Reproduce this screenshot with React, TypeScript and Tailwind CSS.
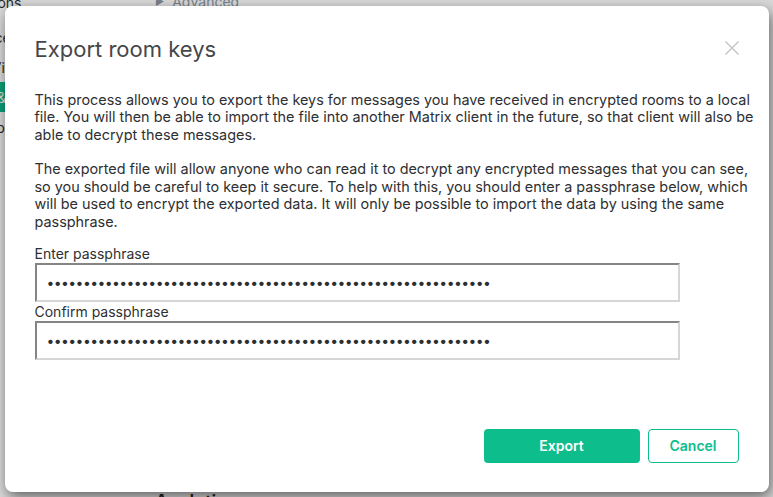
const INTRO =
  'This process allows you to export the keys for messages you have received in encrypted rooms to a local file. You will then be able to import the file into another Matrix client in the future, so that client will also be able to decrypt these messages.';
const WARNING =
  'The exported file will allow anyone who can read it to decrypt any encrypted messages that you can see, so you should be careful to keep it secure. To help with this, you should enter a passphrase below, which will be used to encrypt the exported data. It will only be possible to import the data by using the same passphrase.';

const SECRET = 'x'.repeat(61);

const tabs = ['Notifications', 'Preferences', 'Voice & Video', 'Security & Privacy', 'Labs & About'];

function CloseIcon() {
  return (
    <svg width="14" height="14" viewBox="0 0 14 14" fill="none">
      <path d="M0.5 0.5L13.5 13.5M13.5 0.5L0.5 13.5" stroke="#c1c1c1" strokeWidth="1.2" />
    </svg>
  );
}

function PassField({ label }: { label: string }) {
  return (
    <label className="flex flex-col">
      <span className="text-[14px] leading-[19px] text-[#2e2f32]">{label}</span>
      <input
        type="password"
        readOnly
        value={SECRET}
        className="h-[39px] w-[645px] border-2 border-t-[#858585] border-l-[#858585] border-b-[#d6d6d6] border-r-[#d6d6d6] bg-white pl-[10px] text-[14px] tracking-[-0.6px] text-[#2e2f32] outline-none"
      />
    </label>
  );
}

export default function App() {
  return (
    <div className="relative h-[497px] w-[773px] overflow-hidden bg-white font-[Inter,'Noto_Sans',sans-serif] text-[#2e2f32]">
      {/* settings page behind the dialog */}
      <div className="flex h-full">
        <nav className="-ml-[70px] -mt-[13px] flex w-[110px] shrink-0 flex-col text-[14px]">
          {tabs.map((t, i) => (
            <div
              key={t}
              className={
                t === 'Security & Privacy'
                  ? 'flex h-[30px] items-center whitespace-nowrap rounded-[4px] bg-[#0dbd8b] pl-[8px] text-white'
                  : i === 0
                    ? 'mb-[5px] flex h-[30px] items-center whitespace-nowrap pl-[8px] text-[#2e2f32]'
                    : 'flex h-[30px] items-center whitespace-nowrap pl-[8px] text-[#2e2f32]'
              }
            >
              {t}
            </div>
          ))}
        </nav>
        <main className="flex flex-1 flex-col justify-between pl-[115px]">
          <div className="-mt-[7px] flex items-center gap-[8px] text-[14px] leading-[17px] text-[#8d99a5]">
            <span className="text-[10px]">▶</span>
            <span>Advanced</span>
          </div>
          <h3 className="-mb-[16px] text-[18px] font-semibold leading-[22px] text-[#2e2f32]">Analytics</h3>
        </main>
      </div>

      {/* modal */}
      <div className="absolute inset-0 flex items-center justify-center bg-black/15">
        <div className="relative flex h-[486px] w-[764px] flex-col rounded-[8px] bg-white pb-[29px] pl-[30px] pr-[30px] pt-[29px] shadow-[2px_5px_14px_rgba(0,0,0,0.55)]">
          <h2 className="text-[22px] font-normal leading-[28px] text-[#45474a]">Export room keys</h2>
          <button className="absolute right-[30px] top-[35px]" aria-label="Close">
            <CloseIcon />
          </button>

          <div className="-mr-[28px] mt-[28px] text-[14.4px] leading-[17.5px]">
            <p className="mb-[17px]">{INTRO}</p>
            <p>{WARNING}</p>
          </div>

          <div className="mt-[14px] flex flex-col">
            <PassField label="Enter passphrase" />
            <PassField label="Confirm passphrase" />
          </div>

          <div className="mt-auto flex justify-end gap-[8px]">
            <button className="h-[34px] w-[156px] rounded-[4px] bg-[#0dbd8b] text-[14px] font-semibold text-white">
              Export
            </button>
            <button className="h-[34px] w-[91px] rounded-[4px] border border-[#0dbd8b] bg-white text-[14px] font-semibold text-[#0dbd8b]">
              Cancel
            </button>
          </div>
        </div>
      </div>
    </div>
  );
}
